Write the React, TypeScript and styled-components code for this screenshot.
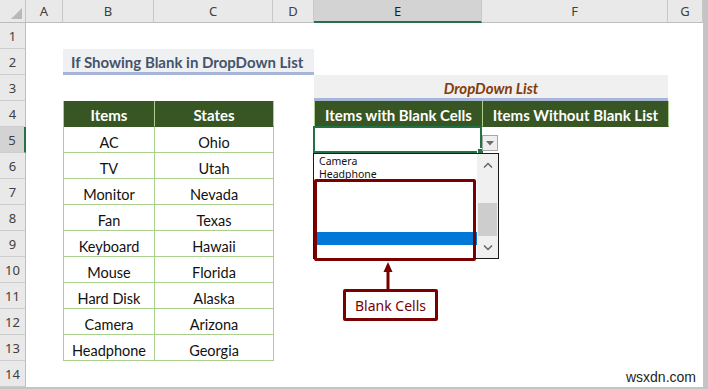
import React from "react";
import styled, { createGlobalStyle } from "styled-components";

const GlobalStyle = createGlobalStyle`
  body {
    margin: 0;
    background: #c4c4c4;
  }
`;

const cols = ["A", "B", "C", "D", "E", "F", "G"];
const rows = Array.from({ length: 14 }, (_, i) => i + 1);

const data = [
  ["AC", "Ohio"],
  ["TV", "Utah"],
  ["Monitor", "Nevada"],
  ["Fan", "Texas"],
  ["Keyboard", "Hawaii"],
  ["Mouse", "Florida"],
  ["Hard Disk", "Alaska"],
  ["Camera", "Arizona"],
  ["Headphone", "Georgia"],
];

const listItems = ["Camera", "Headphone", "", "", "", "", "", ""];

const Frame = styled.div`
  width: 708px;
  height: 389px;
  background: #c4c4c4;
  overflow: hidden;
`;

const Sheet = styled.div`
  position: relative;
  width: 703px;
  height: 387px;
  background: #ffffff;
  display: grid;
  grid-template-columns: 26px 37px 91px 119px 41px 168px 186px 35px;
  grid-template-rows: 23px repeat(14, 26px);
  font-family: Lato, "Liberation Sans", sans-serif;
  overflow: hidden;
`;

const Corner = styled.div`
  grid-column: 1;
  grid-row: 1;
  background: #e9e9e9;
  border-right: 1px solid #c4c4c4;
  border-bottom: 1px solid #bdbdbd;
  box-sizing: border-box;
  display: flex;
  align-items: flex-end;
  justify-content: flex-end;
  padding: 0 3px 3px 0;
`;

const ColHead = styled.div<{ $active?: boolean }>`
  grid-row: 1;
  background: ${(p) => (p.$active ? "#d3d3d3" : "#e9e9e9")};
  border-right: 1px solid #c8c8c8;
  border-bottom: ${(p) => (p.$active ? "2px solid #217346" : "1px solid #bdbdbd")};
  box-sizing: border-box;
  display: flex;
  align-items: center;
  justify-content: center;
  font-family: "Noto Sans", sans-serif;
  font-size: 13px;
  color: ${(p) => (p.$active ? "#1f1f1f" : "#404040")};
`;

const RowHead = styled.div<{ $active?: boolean }>`
  grid-column: 1;
  background: ${(p) => (p.$active ? "#d3d3d3" : "#e9e9e9")};
  border-right: ${(p) => (p.$active ? "2px solid #217346" : "1px solid #bdbdbd")};
  border-bottom: 1px solid #cdcdcd;
  box-sizing: border-box;
  display: flex;
  align-items: center;
  justify-content: center;
  font-family: "Noto Sans", sans-serif;
  font-size: 13px;
  color: #404040;
`;

const Title = styled.div`
  grid-column: 3 / 6;
  grid-row: 3;
  background: #eff0f2;
  border-bottom: 3px solid #a7b6d8;
  box-sizing: border-box;
  display: flex;
  align-items: center;
  padding: 3px 0 0 8px;
  font-weight: 700;
  font-size: 15px;
  color: #44546a;
`;

const Banner = styled.div`
  grid-column: 6 / 8;
  grid-row: 4;
  background: #f0f0f0;
  border-bottom: 3px solid #a7b6d8;
  box-sizing: border-box;
  display: flex;
  align-items: center;
  justify-content: center;
  padding-top: 2px;
  font-weight: 700;
  font-style: italic;
  font-size: 15px;
  color: #843c0c;
`;

const Table = styled.div<{ $col: string; $row: string; $cols: string }>`
  grid-column: ${(p) => p.$col};
  grid-row: ${(p) => p.$row};
  display: grid;
  grid-template-columns: ${(p) => p.$cols};
  grid-auto-rows: 26px;
  border-left: 1px solid #a9d08e;
  box-sizing: border-box;
`;

const HeadCell = styled.div`
  background: #375623;
  color: #ffffff;
  font-weight: 700;
  font-size: 15px;
  border-right: 1px solid #a9d08e;
  border-bottom: 1px solid #375623;
  box-sizing: border-box;
  display: flex;
  align-items: center;
  justify-content: center;
  padding-top: 2px;
`;

const DataCell = styled.div`
  color: #111111;
  font-size: 14.5px;
  border-right: 1px solid #a9d08e;
  border-bottom: 1px solid #a9d08e;
  box-sizing: border-box;
  display: flex;
  align-items: center;
  justify-content: center;
  padding-top: 6px;
`;

const ActiveCell = styled.div`
  grid-column: 6;
  grid-row: 6;
  margin: -1px 0 0 -1px;
  border: 2px solid #217346;
  position: relative;
`;

const Handle = styled.span`
  position: absolute;
  right: -4px;
  bottom: -4px;
  width: 5px;
  height: 5px;
  background: #217346;
  border: 1px solid #ffffff;
`;

const DropButton = styled.div`
  position: absolute;
  left: 482px;
  top: 135px;
  width: 16px;
  height: 16px;
  box-sizing: border-box;
  background: #eeeeee;
  border: 1px solid #a6a6a6;
  display: flex;
  align-items: center;
  justify-content: center;
`;

const Dropdown = styled.div`
  position: absolute;
  left: 313px;
  top: 153px;
  width: 186px;
  height: 106px;
  box-sizing: border-box;
  border: 1px solid #1a1a1a;
  background: #ffffff;
  display: flex;
`;

const List = styled.div`
  flex: 1;
  display: flex;
  flex-direction: column;
  padding-top: 1px;
`;

const ListItem = styled.div<{ $selected?: boolean }>`
  height: 13px;
  line-height: 13px;
  padding-left: 5px;
  font-family: "Noto Sans", sans-serif;
  font-size: 10.5px;
  color: #111111;
  overflow: hidden;
  background: ${(p) => (p.$selected ? "#0078d7" : "transparent")};
`;

const Scrollbar = styled.div`
  width: 21px;
  background: #f0f0f0;
  display: flex;
  flex-direction: column;
  align-items: center;
`;

const ScrollArrow = styled.div`
  height: 21px;
  width: 100%;
  display: flex;
  align-items: center;
  justify-content: center;
`;

const Track = styled.div`
  flex: 1;
  width: 100%;
  display: flex;
  flex-direction: column;
  justify-content: flex-end;
  padding-bottom: 1px;
  box-sizing: border-box;
`;

const Thumb = styled.div`
  height: 33px;
  margin: 0 1px;
  background: #cdcdcd;
`;

const RedBox = styled.div`
  position: absolute;
  left: 314px;
  top: 179px;
  width: 162px;
  height: 82px;
  box-sizing: border-box;
  border: 3px solid #7a0000;
  border-radius: 2px;
`;

const Pointer = styled.svg`
  position: absolute;
  left: 382px;
  top: 261px;
`;

const Callout = styled.div`
  position: absolute;
  left: 343px;
  top: 289px;
  width: 95px;
  height: 32px;
  box-sizing: border-box;
  border: 3px solid #7a0000;
  border-radius: 2px;
  background: #ffffff;
  display: flex;
  align-items: center;
  justify-content: center;
  font-family: "Noto Sans", sans-serif;
  font-size: 14px;
  color: #7a0000;
`;

const Watermark = styled.div`
  position: absolute;
  right: 7px;
  bottom: 2px;
  font-family: "Liberation Sans", Arial, sans-serif;
  font-size: 14px;
  color: #1e1e1e;
`;

export default function App() {
  return (
    <>
      <GlobalStyle />
      <Frame>
        <Sheet>
          <Corner>
            <svg width="11" height="11" viewBox="0 0 11 11">
              <polygon points="11,0 11,11 0,11" fill="#b8b8b8" />
            </svg>
          </Corner>
          {cols.map((c) => (
            <ColHead key={c} $active={c === "E"}>
              {c}
            </ColHead>
          ))}
          {rows.map((r) => (
            <RowHead key={r} $active={r === 5} style={{ gridRow: r + 1 }}>
              {r}
            </RowHead>
          ))}

          <Title>If Showing Blank in DropDown List</Title>
          <Banner>DropDown List</Banner>

          <Table $col="3 / 5" $row="5 / 15" $cols="91px 119px">
            <HeadCell>Items</HeadCell>
            <HeadCell>States</HeadCell>
            {data.map(([item, state]) => (
              <React.Fragment key={item}>
                <DataCell>{item}</DataCell>
                <DataCell>{state}</DataCell>
              </React.Fragment>
            ))}
          </Table>

          <Table $col="6 / 8" $row="5" $cols="168px 186px">
            <HeadCell>Items with Blank Cells</HeadCell>
            <HeadCell>Items Without Blank List</HeadCell>
          </Table>

          <ActiveCell>
            <Handle />
          </ActiveCell>

          <DropButton>
            <svg width="8" height="5" viewBox="0 0 8 5">
              <polygon points="0,0 8,0 4,4.5" fill="#6b6b6b" />
            </svg>
          </DropButton>

          <Dropdown>
            <List>
              {listItems.map((t, i) => (
                <ListItem key={i} $selected={i === 6}>
                  {t}
                </ListItem>
              ))}
            </List>
            <Scrollbar>
              <ScrollArrow>
                <svg width="10" height="6" viewBox="0 0 10 6">
                  <polyline points="1,5.5 5,1.5 9,5.5" fill="none" stroke="#606060" strokeWidth="1.4" />
                </svg>
              </ScrollArrow>
              <Track>
                <Thumb />
              </Track>
              <ScrollArrow>
                <svg width="10" height="6" viewBox="0 0 10 6">
                  <polyline points="1,0.5 5,4.5 9,0.5" fill="none" stroke="#606060" strokeWidth="1.4" />
                </svg>
              </ScrollArrow>
            </Scrollbar>
          </Dropdown>

          <RedBox />
          <Pointer width="12" height="30" viewBox="0 0 12 30">
            <polygon points="6,1 10.5,11 1.5,11" fill="#7a0000" />
            <line x1="6" y1="10" x2="6" y2="30" stroke="#7a0000" strokeWidth="3" />
          </Pointer>
          <Callout>Blank Cells</Callout>

          <Watermark>wsxdn.com</Watermark>
        </Sheet>
      </Frame>
    </>
  );
}
